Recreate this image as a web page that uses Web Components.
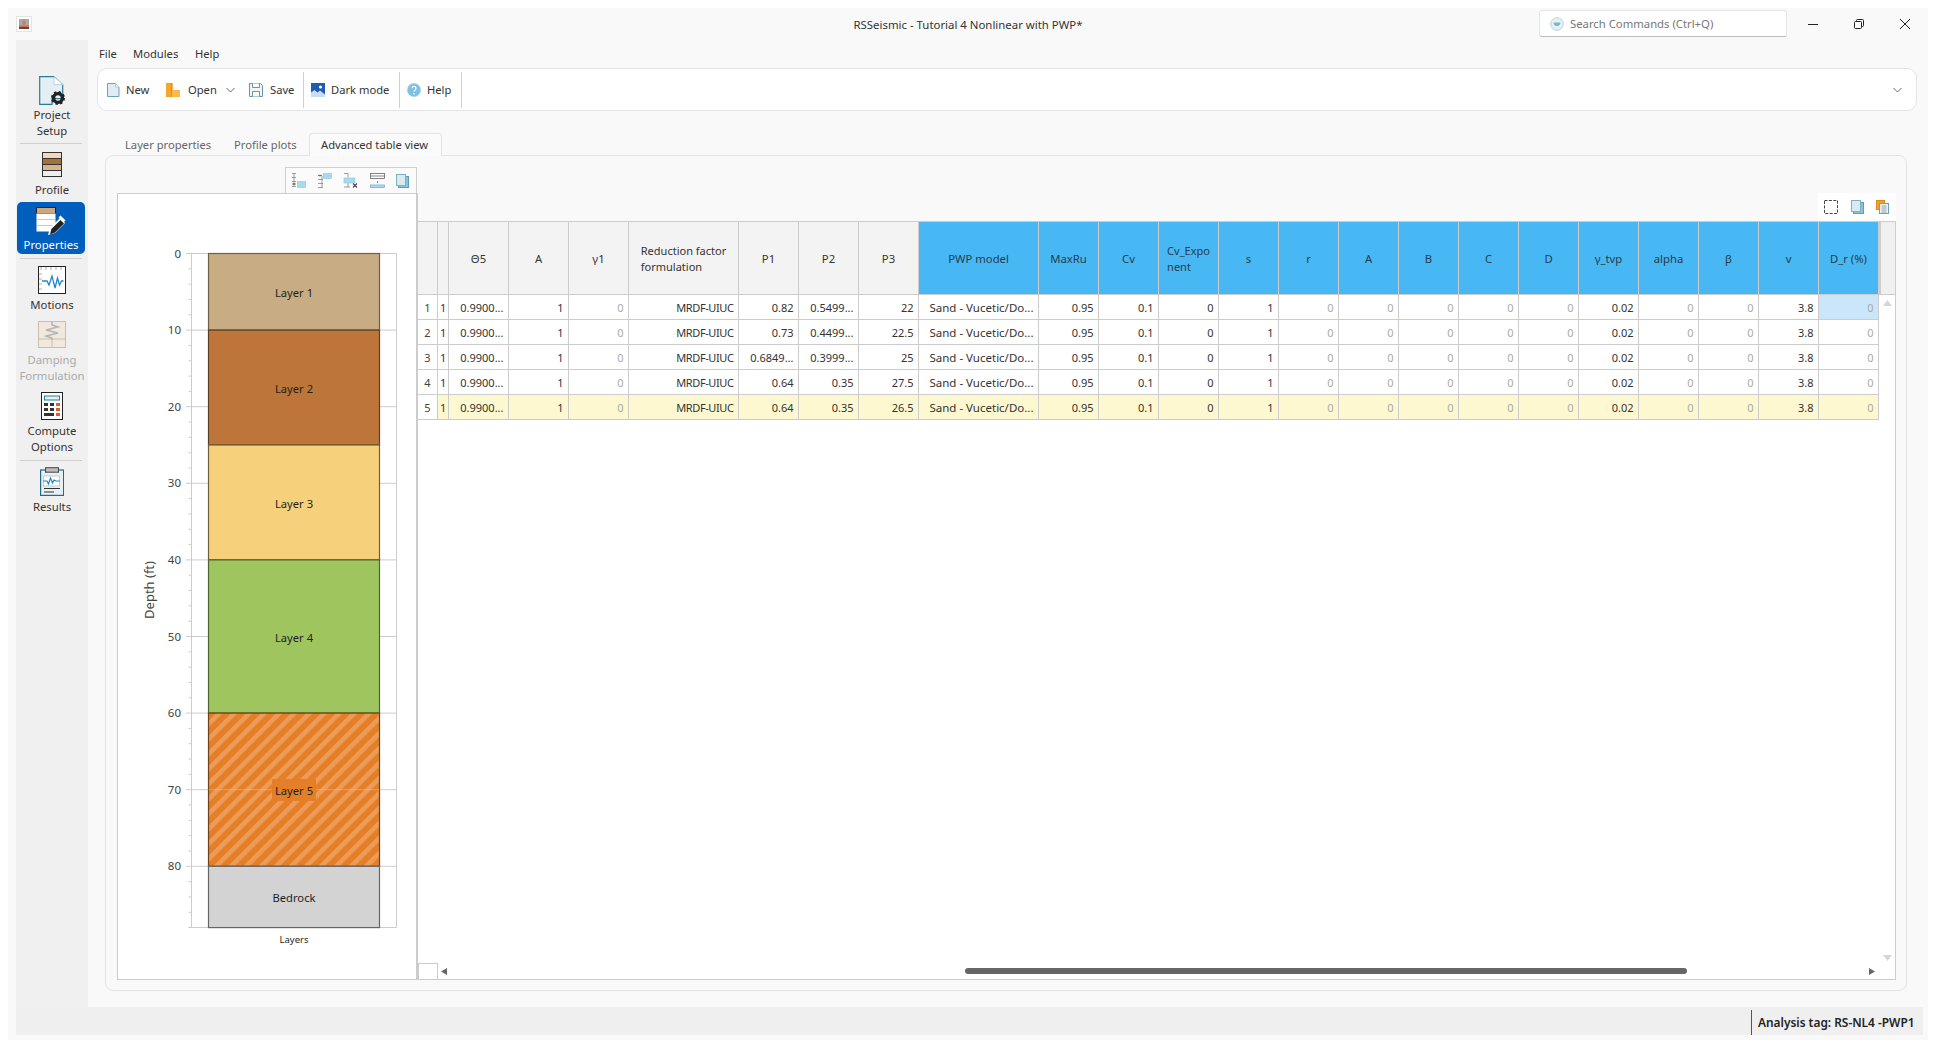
<!DOCTYPE html>
<html lang="en">
<head>
<meta charset="utf-8">
<title>RSSeismic</title>
<style>
html,body{margin:0;padding:0;background:#fff;overflow:hidden;height:100%}
body{font-family:"Noto Sans","Open Sans","Liberation Sans",sans-serif;font-size:11.2px;color:#333}
</style>
</head>
<body>
<app-window>
  <title-bar slot="title" heading="RSSeismic - Tutorial 4 Nonlinear with PWP*"></title-bar>
  <side-nav slot="nav">
    <nav-item style="--pad:36px;--gap:2px;--h:103px"><x-icon name="project"></x-icon>Project<br>Setup</nav-item>
    <nav-sep></nav-sep>
    <nav-item style="--pad:8px;--gap:5px;--h:54px"><x-icon name="profile"></x-icon>Profile</nav-item>
    <nav-item selected style="--pad:5px;--gap:-1px;--h:52px;margin:4px 3px 4px 1px"><x-icon name="properties"></x-icon>Properties</nav-item>
    <nav-sep></nav-sep>
    <nav-item style="--pad:7px;--gap:3px;--h:54px"><x-icon name="motions"></x-icon>Motions</nav-item>
    <nav-item disabled style="--pad:8px;--gap:4px;--h:71px"><x-icon name="damping"></x-icon>Damping<br>Formulation</nav-item>
    <nav-item style="--pad:8px;--gap:3px;--h:76px"><x-icon name="compute"></x-icon>Compute<br>Options</nav-item>
    <nav-sep></nav-sep>
    <nav-item style="--pad:6px;--gap:3px;--h:54px"><x-icon name="results"></x-icon>Results</nav-item>
  </side-nav>
  <menu-bar slot="main"><span>File</span><span>Modules</span><span>Help</span></menu-bar>
  <tool-bar slot="main">
    <tool-button style="--w:59px;--g:5px"><x-icon name="new"></x-icon>New</tool-button>
    <tool-button style="--w:83px;--g:8px"><x-icon name="open"></x-icon>Open<x-icon name="chev" style="margin-left:1px"></x-icon></tool-button>
    <tool-button style="--w:54px"><x-icon name="save"></x-icon>Save</tool-button>
    <tool-sep></tool-sep>
    <tool-button style="--w:88px;--g:6px"><x-icon name="dark"></x-icon>Dark mode</tool-button>
    <tool-sep></tool-sep>
    <tool-button style="--w:54px;--g:6px"><x-icon name="help"></x-icon>Help</tool-button>
    <tool-sep></tool-sep>
    <x-icon name="chev" style="margin-left:auto;margin-right:14px"></x-icon>
  </tool-bar>
  <tab-strip slot="main">
    <tab-item style="--w:109px">Layer properties</tab-item>
    <tab-item style="--w:87px">Profile plots</tab-item>
    <tab-item active style="--w:133px">Advanced table view</tab-item>
  </tab-strip>
  <content-panel slot="main">
    <chart-pane slot="left">
      <icon-strip style="--w:132px;--h:26px;--sp:25.2px;--pl:5px">
        <x-icon name="t1"></x-icon><x-icon name="t2"></x-icon><x-icon name="t3"></x-icon><x-icon name="t4"></x-icon><x-icon name="copy"></x-icon>
      </icon-strip>
      <profile-chart></profile-chart>
    </chart-pane>
    <grid-pane slot="right">
      <icon-strip plain style="--w:78px;--h:28px;--sp:26.5px">
        <x-icon name="select"></x-icon><x-icon name="copy"></x-icon><x-icon name="paste"></x-icon>
      </icon-strip>
      <data-grid></data-grid>
    </grid-pane>
  </content-panel>
  <status-bar slot="status">Analysis tag: RS-NL4 -PWP1</status-bar>
</app-window>

<script>
const ICONS = {
 app:`<svg width="16" height="16" viewBox="0 0 16 16"><rect x=".5" y=".5" width="15" height="15" fill="#fff" stroke="#e4e4e4"/><rect x="3" y="3" width="10" height="10" fill="#a8a8a8"/><rect x="3" y="9.5" width="10" height="1.5" fill="#d96a3c"/><rect x="3" y="11" width="10" height="2" fill="#5a4a45"/><path d="M8 3.5V9.5M6.5 7h3" stroke="#d96a3c"/></svg>`,
 search:`<svg width="14" height="14" viewBox="0 0 14 14"><circle cx="7" cy="7" r="6.3" fill="#e4f0f4" stroke="#b9d3dc"/><path d="M3.6 5.6h6.8a3.4 3.4 0 0 1-6.8 0z" fill="#7fb3ca"/></svg>`,
 min:`<svg width="10" height="10" viewBox="0 0 10 10"><path d="M0 5.5h10" stroke="#222" stroke-width="1"/></svg>`,
 max:`<svg width="10" height="10" viewBox="0 0 10 10"><rect x=".5" y="2.5" width="7" height="7" rx="1" fill="none" stroke="#222"/><path d="M2.5 2.5V1.5a1 1 0 0 1 1-1h5a1 1 0 0 1 1 1v5a1 1 0 0 1-1 1h-1" fill="none" stroke="#222"/></svg>`,
 close:`<svg width="10" height="10" viewBox="0 0 10 10"><path d="M0 0l10 10M10 0L0 10" stroke="#222" stroke-width="1"/></svg>`,
 chev:`<svg width="9" height="6" viewBox="0 0 9 6"><path d="M.5 1l4 4 4-4" fill="none" stroke="#666"/></svg>`,
 new:`<svg width="14" height="14" viewBox="0 0 14 14"><path d="M.5.5h8l3.5 3.5v9.5H.5z" fill="#dfecf3" stroke="#6aa3b7"/><path d="M8.5.5V4H12" fill="#fff" stroke="#a9cbd6"/></svg>`,
 open:`<svg width="14" height="14" viewBox="0 0 14 14"><path d="M0 0h6v14H0z" fill="#f6a72c"/><path d="M6 0h1v7h7v7H6z" fill="#fbb84c"/><path d="M5.4 0v14" stroke="#d98a18" stroke-width=".8"/></svg>`,
 save:`<svg width="14" height="14" viewBox="0 0 14 14"><path d="M.5.5h11l2 2v11H.5z" fill="#f2f5f6" stroke="#6a97a8"/><path d="M3.5.5v4h7v-4M3.5 13.5v-5h7v5" fill="#fff" stroke="#6a97a8"/></svg>`,
 dark:`<svg width="14" height="14" viewBox="0 0 14 14"><rect width="14" height="14" fill="#1d5cb0"/><circle cx="9.5" cy="4" r="1.6" fill="#fff"/><path d="M0 14V9.5l3.5-2.5 3 2.5L9 7.5l5 4V14z" fill="#c9dcf4"/></svg>`,
 help:`<svg width="14" height="14" viewBox="0 0 14 14"><circle cx="7" cy="7" r="6.6" fill="#7cc0e4" stroke="#a9d6ec" stroke-width=".8"/><path d="M5 5.3a2 2 0 1 1 3.2 1.6C7.4 7.5 7 7.8 7 8.8" fill="none" stroke="#fff" stroke-width="1.2"/><circle cx="7" cy="10.7" r=".8" fill="#fff"/></svg>`,
 t1:`<svg width="15" height="15" viewBox="0 0 15 15"><path d="M1 .5h4M3 .5v13M1 4.5h4M1 8.5h4M1 13.5h4" fill="none" stroke="#777" stroke-width=".7"/><path d="M1 11h4M3 10v2" stroke="#555" stroke-width=".8"/><rect x="6.5" y="8.5" width="8" height="6" fill="#a9d9ee" stroke="#8cc6dd" stroke-width=".6"/></svg>`,
 t2:`<svg width="15" height="15" viewBox="0 0 15 15"><path d="M1 14.5h5M5 3v11.5M1 6.5h5M1 10.5h5" fill="none" stroke="#777" stroke-width=".7"/><path d="M1 2.5h4M3 1.5v2" stroke="#555" stroke-width=".8"/><rect x="6.5" y=".5" width="8" height="5" fill="#a9d9ee" stroke="#8cc6dd" stroke-width=".6"/></svg>`,
 t3:`<svg width="15" height="15" viewBox="0 0 15 15"><path d="M1 .5h4M5 .5v4M1 14h6M5 10v4" fill="none" stroke="#777" stroke-width=".7"/><rect x="1" y="5" width="11" height="5" fill="#a9d9ee" stroke="#8cc6dd" stroke-width=".6"/><path d="M10 10.5l4 4M14 10.5l-4 4" stroke="#444" stroke-width="1.1"/></svg>`,
 t4:`<svg width="15" height="15" viewBox="0 0 15 15"><rect x=".5" y=".5" width="14" height="5" fill="#fff" stroke="#666" stroke-width=".8"/><path d="M.5 3h14M7.5 8v2" stroke="#666" stroke-width=".8"/><rect x=".5" y="12" width="14" height="2.5" fill="#a9d9ee" stroke="#6fb3cf" stroke-width=".8"/></svg>`,
 copy:`<svg width="13" height="14" viewBox="0 0 13 14"><rect x="2.5" y="2.5" width="10" height="11" fill="#8cc3d8" stroke="#5d9db6"/><rect x=".5" y=".5" width="9" height="11" fill="#dbeaf1" stroke="#7fb1c5"/></svg>`,
 select:`<svg width="14" height="14" viewBox="0 0 14 14"><rect x=".5" y=".5" width="13" height="13" fill="#fff" stroke="#444" stroke-dasharray="3 1.4"/></svg>`,
 paste:`<svg width="13" height="14" viewBox="0 0 13 14"><rect x=".5" y=".5" width="8" height="9" fill="#f2a12e" stroke="#d98a18"/><rect x="3.5" y="3.5" width="9" height="10" fill="#e9f2f6" stroke="#6f9fb3"/><path d="M5.5 6h5M5.5 8h5M5.5 10h5M5.5 12h5" stroke="#7d8f97" stroke-width=".8"/></svg>`,
 project:`<svg width="26" height="29" viewBox="0 0 26 29"><path d="M.7.7h14l9 8v14H13v5.6H.7z" fill="#e3eff5" stroke="#2a7b95" stroke-width="1.2"/><path d="M15 .7v8h9z" fill="#fff" stroke="#b5d3de"/><circle cx="19" cy="22" r="4.4" fill="none" stroke="#222" stroke-width="3.4"/><circle cx="19" cy="22" r="6" fill="none" stroke="#222" stroke-width="2" stroke-dasharray="2.4 2.3"/></svg>`,
 profile:`<svg width="20" height="25" viewBox="0 0 20 25"><rect x=".5" y=".5" width="19" height="24" fill="#eee" stroke="#333"/><rect x="1" y="1" width="18" height="5.5" fill="#f3d9b8"/><rect x="1" y="7" width="18" height="5" fill="#a2723f"/><rect x="1" y="13" width="18" height="5.5" fill="#d9b488"/><path d="M0 6.5h20M0 12.5h20M0 18.5h20" stroke="#333"/></svg>`,
 properties:`<svg width="30" height="31" viewBox="0 0 30 31"><rect x=".5" y=".5" width="19" height="6" fill="#cfa67a" stroke="#222"/><rect x=".5" y="6.5" width="19" height="18" fill="#fff"/><path d="M1 12.5h18M1 18.5h18" stroke="#c8c8c8"/><path d="M12 28l2-7L24 11l5 5-10 10z" fill="#fff"/><path d="M14 27.5l1.4-5.6L24.5 13l3.5 3.5-9 9z" fill="#222"/><path d="M23.5 9.5l5 5" stroke="#fff" stroke-width="3"/></svg>`,
 motions:`<svg width="28" height="28" viewBox="0 0 28 28"><rect x=".5" y=".5" width="27" height="27" fill="#fff" stroke="#222"/><path d="M3 1v3M8 1v3M13 1v3M18 1v3M23 1v3M1 8h3M1 13h3M1 18h3M1 23h3" stroke="#999" stroke-width=".8"/><path d="M4 15h5l2 4 3-9 3 12 2.5-10 2 7 2-4h2" fill="none" stroke="#2486c8" stroke-width="1.3"/></svg>`,
 damping:`<svg width="28" height="27" viewBox="0 0 28 27"><rect x=".5" y=".5" width="27" height="26" fill="#f2e9de" stroke="#c9bdaf"/><path d="M0 18h28M14 18v9" stroke="#c9bdaf"/><path d="M14 1v3l6 2-12 3 12 3-12 3 6 2v2" fill="none" stroke="#b5b5b5" stroke-width="1.6"/></svg>`,
 compute:`<svg width="22" height="28" viewBox="0 0 22 28"><rect x=".5" y=".5" width="21" height="27" fill="#fff" stroke="#222"/><rect x="3.5" y="4" width="15" height="4" fill="#e4f1f6" stroke="#2a7b95"/><g fill="#333"><rect x="3" y="11" width="4" height="3"/><rect x="9" y="11" width="4" height="3"/><rect x="3" y="16" width="4" height="3"/><rect x="9" y="16" width="4" height="3"/><rect x="3" y="21" width="10" height="3"/></g><g fill="#ea5a28"><rect x="15" y="11" width="4" height="3"/><rect x="15" y="16" width="4" height="3"/><rect x="15" y="21" width="4" height="3"/></g></svg>`,
 results:`<svg width="24" height="29" viewBox="0 0 24 29"><rect x=".6" y="3" width="23" height="25.4" fill="#e6f0f5" stroke="#1f6d85" stroke-width="1.2"/><rect x="5.5" y=".7" width="13" height="4.5" fill="#bdbdbd" stroke="#444"/><rect x="3.5" y="9" width="16" height="10" fill="#fff" stroke="#aaa" stroke-width=".6"/><path d="M3 14h4l1.5 3 2-6 2 5 1.5-3 2 1h4" fill="none" stroke="#2486c8" stroke-width="1.2"/><path d="M4 21.5h16M4 25h10" stroke="#333"/></svg>`
};

function def(name, css, html, init){
  customElements.define(name, class extends HTMLElement{
    constructor(){
      super();
      const r=this.attachShadow({mode:'open'});
      r.innerHTML=`<style>${css}</style>${html||'<slot></slot>'}`;
      if(init) init.call(this,r);
    }
  });
}

def('x-icon',':host{display:inline-flex;flex:none;line-height:0}','',function(r){
  const s=document.createElement('span');
  s.style.display='inline-flex';
  s.innerHTML=ICONS[this.getAttribute('name')]||'';
  r.appendChild(s);
});

def('app-window',`
 :host{display:grid;grid-template-columns:72px 1fr;grid-template-rows:32px 967px 28px;
   margin:8px 0 0 8px;height:1032px;padding:0 5px 5px 8px;box-sizing:border-box;width:1920px;background:#f9f9f9}
 .t{grid-column:1/3;margin-left:-8px;margin-right:-5px}
 .m{display:flex;flex-direction:column;min-width:0}
 .s{grid-column:1/3}
`,`<div class="t"><slot name="title"></slot></div><slot name="nav"></slot><div class="m"><slot name="main"></slot></div><div class="s"><slot name="status"></slot></div>`);

def('title-bar',`
 :host{display:grid;grid-template-columns:1fr auto 1fr;height:32px;color:#333;font-size:11.4px}
 .l{display:flex;align-items:center;padding-left:8px}
 .c{display:flex;align-items:center}
 .r{display:flex;justify-content:flex-end;align-items:flex-start}
 .q{width:248px;height:27px;margin:2px 3px 0 0;box-sizing:border-box;background:#fff;border:1px solid #e6e6e6;border-bottom:1px solid #bbb;
    border-radius:3px;display:flex;align-items:center;gap:6px;padding-left:10px;color:#777;font-size:11.3px}
 .b{width:46px;height:32px;display:flex;align-items:center;justify-content:center}
`,`<div class="l"><x-icon name="app"></x-icon></div><div class="c" id="h"></div>
<div class="r"><div class="q"><x-icon name="search"></x-icon><span>Search Commands (Ctrl+Q)</span></div>
<div class="b"><x-icon name="min"></x-icon></div><div class="b"><x-icon name="max"></x-icon></div><div class="b"><x-icon name="close"></x-icon></div></div>`,
function(r){ r.getElementById('h').textContent=this.getAttribute('heading'); });

def('side-nav',':host{display:flex;flex-direction:column;background:#f0f0f0;min-height:0}');
def('nav-sep',':host{display:block;height:1px;margin:0 6px 0 4px;background:#d0d0d0;flex:none}');
def('nav-item',`
 :host{display:flex;flex-direction:column;align-items:center;flex:none;box-sizing:border-box;height:var(--h);padding-top:var(--pad);
   text-align:center;line-height:16px;font-size:11.3px;color:#333;border-radius:5px}
 :host([selected]){background:#005ebc;color:#fff}
 :host([disabled]){color:#aaa}
 ::slotted(x-icon){margin-bottom:var(--gap)}
`);
def('menu-bar',`
 :host{display:grid;grid-template-columns:34px 62px auto;height:26px;padding-bottom:2px;align-items:center;padding-left:11px;color:#333;font-size:11.2px;flex:none;justify-content:start}
`);
def('tool-bar',`
 :host{display:flex;align-items:center;box-sizing:border-box;height:43px;flex:none;margin:0 6px 0 9px;padding-left:9px;background:#fff;
   border:1px solid #e4e4e4;border-radius:10px;font-size:11.2px;color:#333}
`);
def('tool-button',`:host{display:flex;align-items:center;gap:var(--g,7px);width:var(--w);flex:none;box-sizing:border-box}`);
def('tool-sep',`:host{display:block;width:1px;height:36px;background:#cfcfcf;margin-right:7px;flex:none}`);
def('tab-strip',`:host{display:flex;flex:none;height:23px;margin:22px 0 -1px 25px;position:relative;z-index:1}`);
def('tab-item',`
 :host{display:flex;align-items:center;box-sizing:border-box;width:var(--w);padding-left:12px;color:#666;font-size:11.2px;flex:none;height:23px}
 :host([active]){color:#333;background:#fbfbfb;border:1px solid #e4e4e4;border-bottom:0;border-radius:4px 4px 0 0;padding:0 0 1px 11px}
`);
def('content-panel',`
 :host{display:flex;box-sizing:border-box;height:836px;margin:0 16px 0 17px;padding:11px 10px 10px 11px;border:1px solid #e4e4e4;border-radius:8px;background:#f9f9f9;flex:none}
 .l{display:flex;width:301px;flex:none}
 .r{display:flex;flex:1;min-width:0}
`,`<div class="l"><slot name="left"></slot></div><div class="r"><slot name="right"></slot></div>`);
def('chart-pane',`:host{display:flex;flex-direction:column;width:100%}`);
def('grid-pane',`:host{display:flex;flex-direction:column;width:100%;padding-top:26px;box-sizing:border-box}`);
def('icon-strip',`
 :host{display:flex;align-items:center;justify-content:flex-start;box-sizing:border-box;width:var(--w);height:var(--h);align-self:flex-end;flex:none;
  gap:calc(var(--sp) - 14px);padding-left:var(--pl,6px);background:#fbfbfb;border:1px solid #d0d0d0;border-bottom:0;margin-right:1px}
 :host([plain]){background:#fff;border:0;margin-right:0}
`);
def('status-bar',`
 :host{display:flex;justify-content:flex-end;align-items:flex-end;height:28px;background:#efefef;font-size:11.9px;font-weight:600;color:#222}
 span{box-sizing:border-box;width:172px;height:25px;border-left:1px solid #555;padding-left:6px;line-height:25px;white-space:nowrap}
`,`<span><slot></slot></span>`);

def('profile-chart',`
 :host{display:block;flex:1;box-sizing:border-box;background:#fff;border:1px solid #ccc;border-right:2px solid #ccc;font-size:12px;min-height:0}
 svg{display:block}
 text{font-family:"Noto Sans","Open Sans",sans-serif;fill:#1f1f1f}
 text.ax{fill:#444}
`,`<div id="c"></div>`,function(r){
  const Y=d=>253.5+7.66*d;
  let g='';
  for(let d=0;d<=88;d+=2){
    const y=Y(d),maj=d%10===0;
    if(maj){
      g+=`<path d="M186 ${y}H396.5" stroke="#ccc"/>`;
      g+=`<text class="ax" x="181" y="${y+4}" text-anchor="end" font-size="11.5">${d}</text>`;
    } else g+=`<path d="M188.5 ${y}H191.5" stroke="#ccc"/>`;
  }
  const L=[[0,10,'#c8ac84','#6f5f44','Layer 1',293],[10,25,'#bd7539','#5b3f24','Layer 2',389],[25,40,'#f6d07a','#6d6038','Layer 3',504],[40,60,'#9fc55f','#4f6330','Layer 4',638],[60,80,'url(#h)','#6e4216','',0],[80,88,'#d3d3d3','#666','Bedrock',898]];
  let b='';
  for(const [a,z,f,s,t,ty] of L){
    b+=`<rect x="208.5" y="${Y(a)}" width="171" height="${Y(z)-Y(a)}" fill="${f}" stroke="${s}" stroke-width="1.2"/>`;
    if(t) b+=`<text x="294" y="${ty+4}" text-anchor="middle" font-size="11.2">${t}</text>`;
  }
  r.getElementById('c').innerHTML=`<svg width="298" height="785" viewBox="118 194 298 785">
   <defs><pattern id="h" width="10.6" height="10.6" patternUnits="userSpaceOnUse" patternTransform="rotate(45)">
     <rect width="10.6" height="10.6" fill="#e57f27"/><rect width="4.6" height="10.6" fill="#ec9c58"/></pattern></defs>
   <path d="M191.5 253.5V927.5M396.5 253.5V927.5M188.5 927.5H396.5" fill="none" stroke="#ccc"/>
   ${g}${b}
   <path d="M208.5 ${Y(70)}H379.5" stroke="#ddd" stroke-opacity=".35"/>
   <rect x="272" y="779" width="44" height="22" rx="1" fill="#e57f27"/>
   <text x="294" y="795" text-anchor="middle" font-size="11.2">Layer 5</text>
   <text class="ax" transform="translate(153.5 590) rotate(-90)" text-anchor="middle" font-size="13">Depth (ft)</text>
   <text x="294" y="942.5" text-anchor="middle" font-size="9.5">Layers</text>
  </svg>`;
});

def('data-grid',`
 :host{display:flex;flex-direction:column;flex:1;min-height:0;box-sizing:border-box;background:#fff;border-right:1px solid #ccc;border-bottom:1px solid #ccc;font-size:11px;color:#333}
 .top{display:flex;flex:1;min-height:0}
 .t{display:grid;width:1461px;flex:none;align-content:start;
    grid-template-columns:20px 11px 60px 60px 60px 110px 60px 60px 60px 120px repeat(14,60px);grid-template-rows:74px repeat(5,25px)}
 .c{box-sizing:border-box;border-right:1px solid #ccc;border-bottom:1px solid #ccc;display:flex;align-items:center;justify-content:flex-end;padding-right:4.5px;white-space:nowrap;overflow:hidden;padding-top:1px}
 .h{background:#f3f3f3;border-top:1px solid #ccc;justify-content:center;padding:1px 0 0;line-height:16px;text-align:center;font-size:11.3px}
 .h.b{background:#48b8f5;color:#263c4a}
 .h.l{text-align:left;font-size:11px}
 .n{justify-content:center;padding:0;color:#444}
 .o{justify-content:flex-start;padding:0 0 0 2px}
 .z{color:#aaa}
 .y{background:#fef8d0}
 .s{background:#cbe6fb}
 .m{letter-spacing:-.4px}
 .w{font-size:11.5px}
 .v{width:16px;flex:none;display:flex;flex-direction:column}
 .vh{height:74px;box-sizing:border-box;background:#f0f0f0;border-left:2px solid #ccc;border-top:1px solid #ccc;border-bottom:1px solid #ccc;flex:none}
 .vb{flex:1;display:flex;flex-direction:column;justify-content:space-between;align-items:center;padding:5px 0 2px 0}
 .hs{height:16px;flex:none;display:flex;align-items:center}
 .cor{width:20px;height:16px;box-sizing:border-box;border:1px solid #ccc;border-bottom:0;flex:none}
 .tr{flex:1;display:flex;align-items:center;padding:0 20px 0 3px}
 .th{width:722px;height:6px;border-radius:3px;background:#666;margin-left:518px}
 .sp{flex:1}
`,`<div class="top"><div class="t" id="t"></div>
  <div class="v"><div class="vh"></div><div class="vb">
    <svg width="9" height="6" viewBox="0 0 9 6"><path d="M4.5 0L9 6H0z" fill="#d6d6d6"/></svg>
    <svg width="9" height="6" viewBox="0 0 9 6"><path d="M0 0h9L4.5 6z" fill="#d6d6d6"/></svg>
  </div></div></div>
 <div class="hs"><div class="cor"></div><div class="tr">
   <svg width="6" height="7" viewBox="0 0 6 7"><path d="M6 0v7L0 3.5z" fill="#666"/></svg>
   <div class="th"></div><div class="sp"></div>
   <svg width="6" height="7" viewBox="0 0 6 7"><path d="M0 0v7l6-3.5z" fill="#666"/></svg>
 </div></div>`,function(r){
  const heads=[['',0],['',0],['Θ5',0],['A',0],['γ1',0],['Reduction factor<br>formulation',0,1],['P1',0],['P2',0],['P3',0],['PWP model',1],['MaxRu',1],['Cv',1],['Cv_Expo<br>nent',1,1],['s',1],['r',1],['A',1],['B',1],['C',1],['D',1],['γ_tvp',1],['alpha',1],['β',1],['v',1],['D_r (%)',1]];
  const P1=['0.82','0.73','0.6849...','0.64','0.64'],P2=['0.5499...','0.4499...','0.3999...','0.35','0.35'],P3=['22','22.5','25','27.5','26.5'];
  let h='';
  for(const [t,b,l] of heads) h+=`<div class="c h${b?' b':''}${l?' l':''}"><span>${t}</span></div>`;
  for(let i=0;i<5;i++){
    const y=i===4?' y':'';
    const vals=[['0.9900...'],['1'],['0','z'],['MRDF-UIUC','m'],[P1[i]],[P2[i]],[P3[i]],['Sand - Vucetic/Do...','w'],['0.95'],['0.1'],['0'],['1'],['0','z'],['0','z'],['0','z'],['0','z'],['0','z'],['0.02'],['0','z'],['0','z'],['3.8'],['0','z']];
    h+=`<div class="c n">${i+1}</div><div class="c o${y}">1</div>`;
    vals.forEach(([v,z],j)=>{
      const s=(i===0&&j===vals.length-1)?' s':y;
      h+=`<div class="c${z?' '+z:''}${s}">${v}</div>`;
    });
  }
  r.getElementById('t').innerHTML=h;
});
</script>
</body>
</html>
